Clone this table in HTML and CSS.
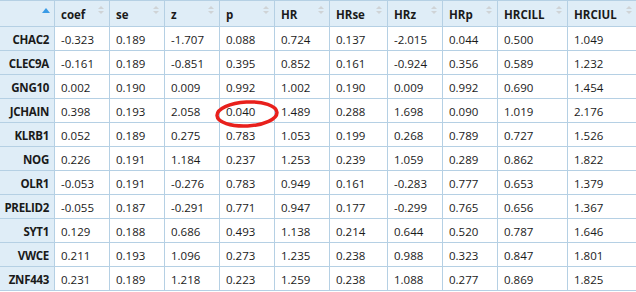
FILE: index.html
```html
<!DOCTYPE html>
<html lang="en">
<head>
    <meta charset="UTF-8">
    <title>Cox results</title>
    <link rel="stylesheet" href="styles.css">
</head>
<body>
    <div class="table-wrap">
        <table class="results">
            <colgroup>
                <col class="c-name">
                <col class="c-std">
                <col class="c-std">
                <col class="c-std">
                <col class="c-std">
                <col class="c-std">
                <col class="c-wide">
                <col class="c-std">
                <col class="c-std">
                <col class="c-ci">
                <col class="c-ci">
            </colgroup>
            <thead>
                <tr>
                    <th class="name-head"><span class="sort asc"></span></th>
                    <th>coef<span class="sort"></span></th>
                    <th>se<span class="sort"></span></th>
                    <th>z<span class="sort"></span></th>
                    <th>p<span class="sort"></span></th>
                    <th>HR<span class="sort"></span></th>
                    <th>HRse<span class="sort"></span></th>
                    <th>HRz<span class="sort"></span></th>
                    <th>HRp<span class="sort"></span></th>
                    <th>HRCILL<span class="sort"></span></th>
                    <th>HRCIUL<span class="sort"></span></th>
                </tr>
            </thead>
            <tbody>
                <tr><th>CHAC2</th><td>-0.323</td><td>0.189</td><td>-1.707</td><td>0.088</td><td>0.724</td><td>0.137</td><td>-2.015</td><td>0.044</td><td>0.500</td><td>1.049</td></tr>
                <tr><th>CLEC9A</th><td>-0.161</td><td>0.189</td><td>-0.851</td><td>0.395</td><td>0.852</td><td>0.161</td><td>-0.924</td><td>0.356</td><td>0.589</td><td>1.232</td></tr>
                <tr><th>GNG10</th><td>0.002</td><td>0.190</td><td>0.009</td><td>0.992</td><td>1.002</td><td>0.190</td><td>0.009</td><td>0.992</td><td>0.690</td><td>1.454</td></tr>
                <tr><th>JCHAIN</th><td>0.398</td><td>0.193</td><td>2.058</td><td>0.040</td><td>1.489</td><td>0.288</td><td>1.698</td><td>0.090</td><td>1.019</td><td>2.176</td></tr>
                <tr><th>KLRB1</th><td>0.052</td><td>0.189</td><td>0.275</td><td>0.783</td><td>1.053</td><td>0.199</td><td>0.268</td><td>0.789</td><td>0.727</td><td>1.526</td></tr>
                <tr><th>NOG</th><td>0.226</td><td>0.191</td><td>1.184</td><td>0.237</td><td>1.253</td><td>0.239</td><td>1.059</td><td>0.289</td><td>0.862</td><td>1.822</td></tr>
                <tr><th>OLR1</th><td>-0.053</td><td>0.191</td><td>-0.276</td><td>0.783</td><td>0.949</td><td>0.161</td><td>-0.283</td><td>0.777</td><td>0.653</td><td>1.379</td></tr>
                <tr><th>PRELID2</th><td>-0.055</td><td>0.187</td><td>-0.291</td><td>0.771</td><td>0.947</td><td>0.177</td><td>-0.299</td><td>0.765</td><td>0.656</td><td>1.367</td></tr>
                <tr><th>SYT1</th><td>0.129</td><td>0.188</td><td>0.686</td><td>0.493</td><td>1.138</td><td>0.214</td><td>0.644</td><td>0.520</td><td>0.787</td><td>1.646</td></tr>
                <tr><th>VWCE</th><td>0.211</td><td>0.193</td><td>1.096</td><td>0.273</td><td>1.235</td><td>0.238</td><td>0.988</td><td>0.323</td><td>0.847</td><td>1.801</td></tr>
                <tr><th>ZNF443</th><td>0.231</td><td>0.189</td><td>1.218</td><td>0.223</td><td>1.259</td><td>0.238</td><td>1.088</td><td>0.277</td><td>0.869</td><td>1.825</td></tr>
            </tbody>
        </table>

        <!-- hand-drawn highlight round p of JCHAIN -->
        <svg class="mark" width="68" height="32" viewBox="0 0 68 32">
            <ellipse cx="34" cy="16" rx="30" ry="12" transform="rotate(-3 34 16)" fill="none" stroke="#e8201c" stroke-width="3.5"/>
        </svg>
    </div>
</body>
</html>
```

FILE: styles.css
```css
:root {
    --head-bg: #dfedf7;
    --line: #b5d0e4;
    --text: #1a1a1a;
    --arrow: #cfd3d6;
    --arrow-on: #3a9be6;
}

body {
    margin: 0;
    background: #ffffff;
    font-family: 'Open Sans', 'Noto Sans', sans-serif;
    font-size: 11.5px;
    color: var(--text);
}

.table-wrap {
    position: relative;
    width: 636px;
    overflow: hidden;
}

.results {
    table-layout: fixed;
    border-collapse: separate;
    border-spacing: 0;
    width: 637px;
}

.c-name { width: 55px; }
.c-std  { width: 55px; }
.c-wide { width: 58px; }
.c-ci   { width: 70px; }

.results th,
.results td {
    box-sizing: border-box;
    border-right: 1px solid var(--line);
    border-bottom: 1px solid var(--line);
    padding: 2px 6px 0;
    line-height: 21px;
    text-align: left;
    white-space: nowrap;
    overflow: hidden;
}

.results thead th {
    position: relative;
    background: var(--head-bg);
    border-top: 1px solid var(--line);
    padding-top: 3px;
    line-height: 22px;
    font-weight: bold;
}

.results tbody th {
    background: var(--head-bg);
    font-weight: bold;
    text-align: right;
    padding-left: 2px;
    padding-right: 5px;
    letter-spacing: -0.3px;
}

.results tbody td {
    background: #ffffff;
}

/* sort arrows */
.sort {
    position: absolute;
    top: 5px;
    right: 5px;
    width: 7px;
    height: 9px;
}

.sort::before,
.sort::after {
    content: "";
    position: absolute;
    left: 1px;
    border-left: 3px solid transparent;
    border-right: 3px solid transparent;
}

.sort::before {
    top: 0;
    border-bottom: 3px solid var(--arrow);
}

.sort::after {
    top: 5px;
    border-top: 3px solid var(--arrow);
}

.sort.asc {
    top: 7px;
}

.sort.asc::before {
    left: 0;
    border-left-width: 4px;
    border-right-width: 4px;
    border-bottom: 5px solid var(--arrow-on);
}

.sort.asc::after {
    display: none;
}

.mark {
    position: absolute;
    left: 213px;
    top: 98px;
}
```
